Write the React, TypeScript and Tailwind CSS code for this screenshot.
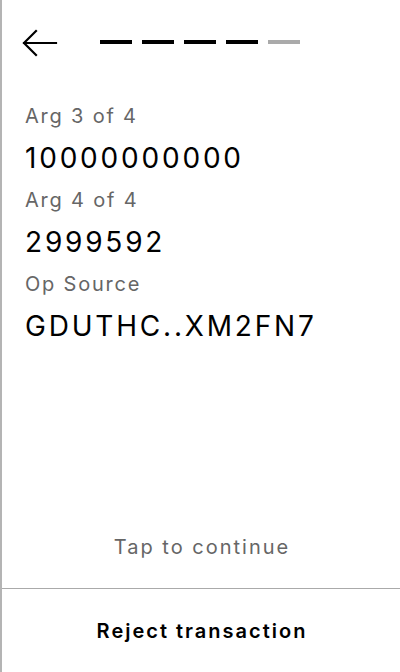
import React from "react";

const rows = [
  { label: "Arg 3 of 4", value: "10000000000" },
  { label: "Arg 4 of 4", value: "2999592" },
  { label: "Op Source", value: "GDUTHC..XM2FN7" },
];

export default function App() {
  return (
    <div
      className="flex h-[672px] w-[400px] flex-col border-l-2 border-[#b4b4b4] bg-white"
      style={{ fontFamily: "Inter, 'Noto Sans', sans-serif" }}
    >
      <div className="flex items-start pt-[29px] pl-[19px]">
        <svg width="38" height="28" viewBox="0 0 38 28" fill="none" stroke="#000" strokeWidth="2.2" strokeLinecap="square">
          <path d="M3 14 H35 M15 2 L3 14 L15 26" />
        </svg>
        <div className="ml-[41px] mt-[11px] flex gap-[10px]">
          <div className="h-1 w-8 bg-black" />
          <div className="h-1 w-8 bg-black" />
          <div className="h-1 w-8 bg-black" />
          <div className="h-1 w-8 bg-black" />
          <div className="h-1 w-8 bg-[#aaaaaa]" />
        </div>
      </div>
      <div className="flex flex-1 flex-col pl-[23px] pt-[47px]">
        {rows.map((r, i) => (
          <div key={r.label} className={i > 0 ? "mt-[13px]" : ""}>
            <div className="text-[20px] leading-[24px] tracking-[0.09em] text-[#666666]">{r.label}</div>
            <div className="mt-[13px] text-[28px] leading-[34px] tracking-[0.1em] text-black">{r.value}</div>
          </div>
        ))}
      </div>
      <div className="pb-[29px] pl-[2px] text-center text-[20px] leading-[24px] tracking-[0.1em] text-[#666666]">
        Tap to continue
      </div>
      <div className="flex h-[84px] items-center justify-center border-t border-[#aaaaaa] pl-[2px] text-[20px] font-semibold tracking-[0.1em] text-black">
        Reject transaction
      </div>
    </div>
  );
}
